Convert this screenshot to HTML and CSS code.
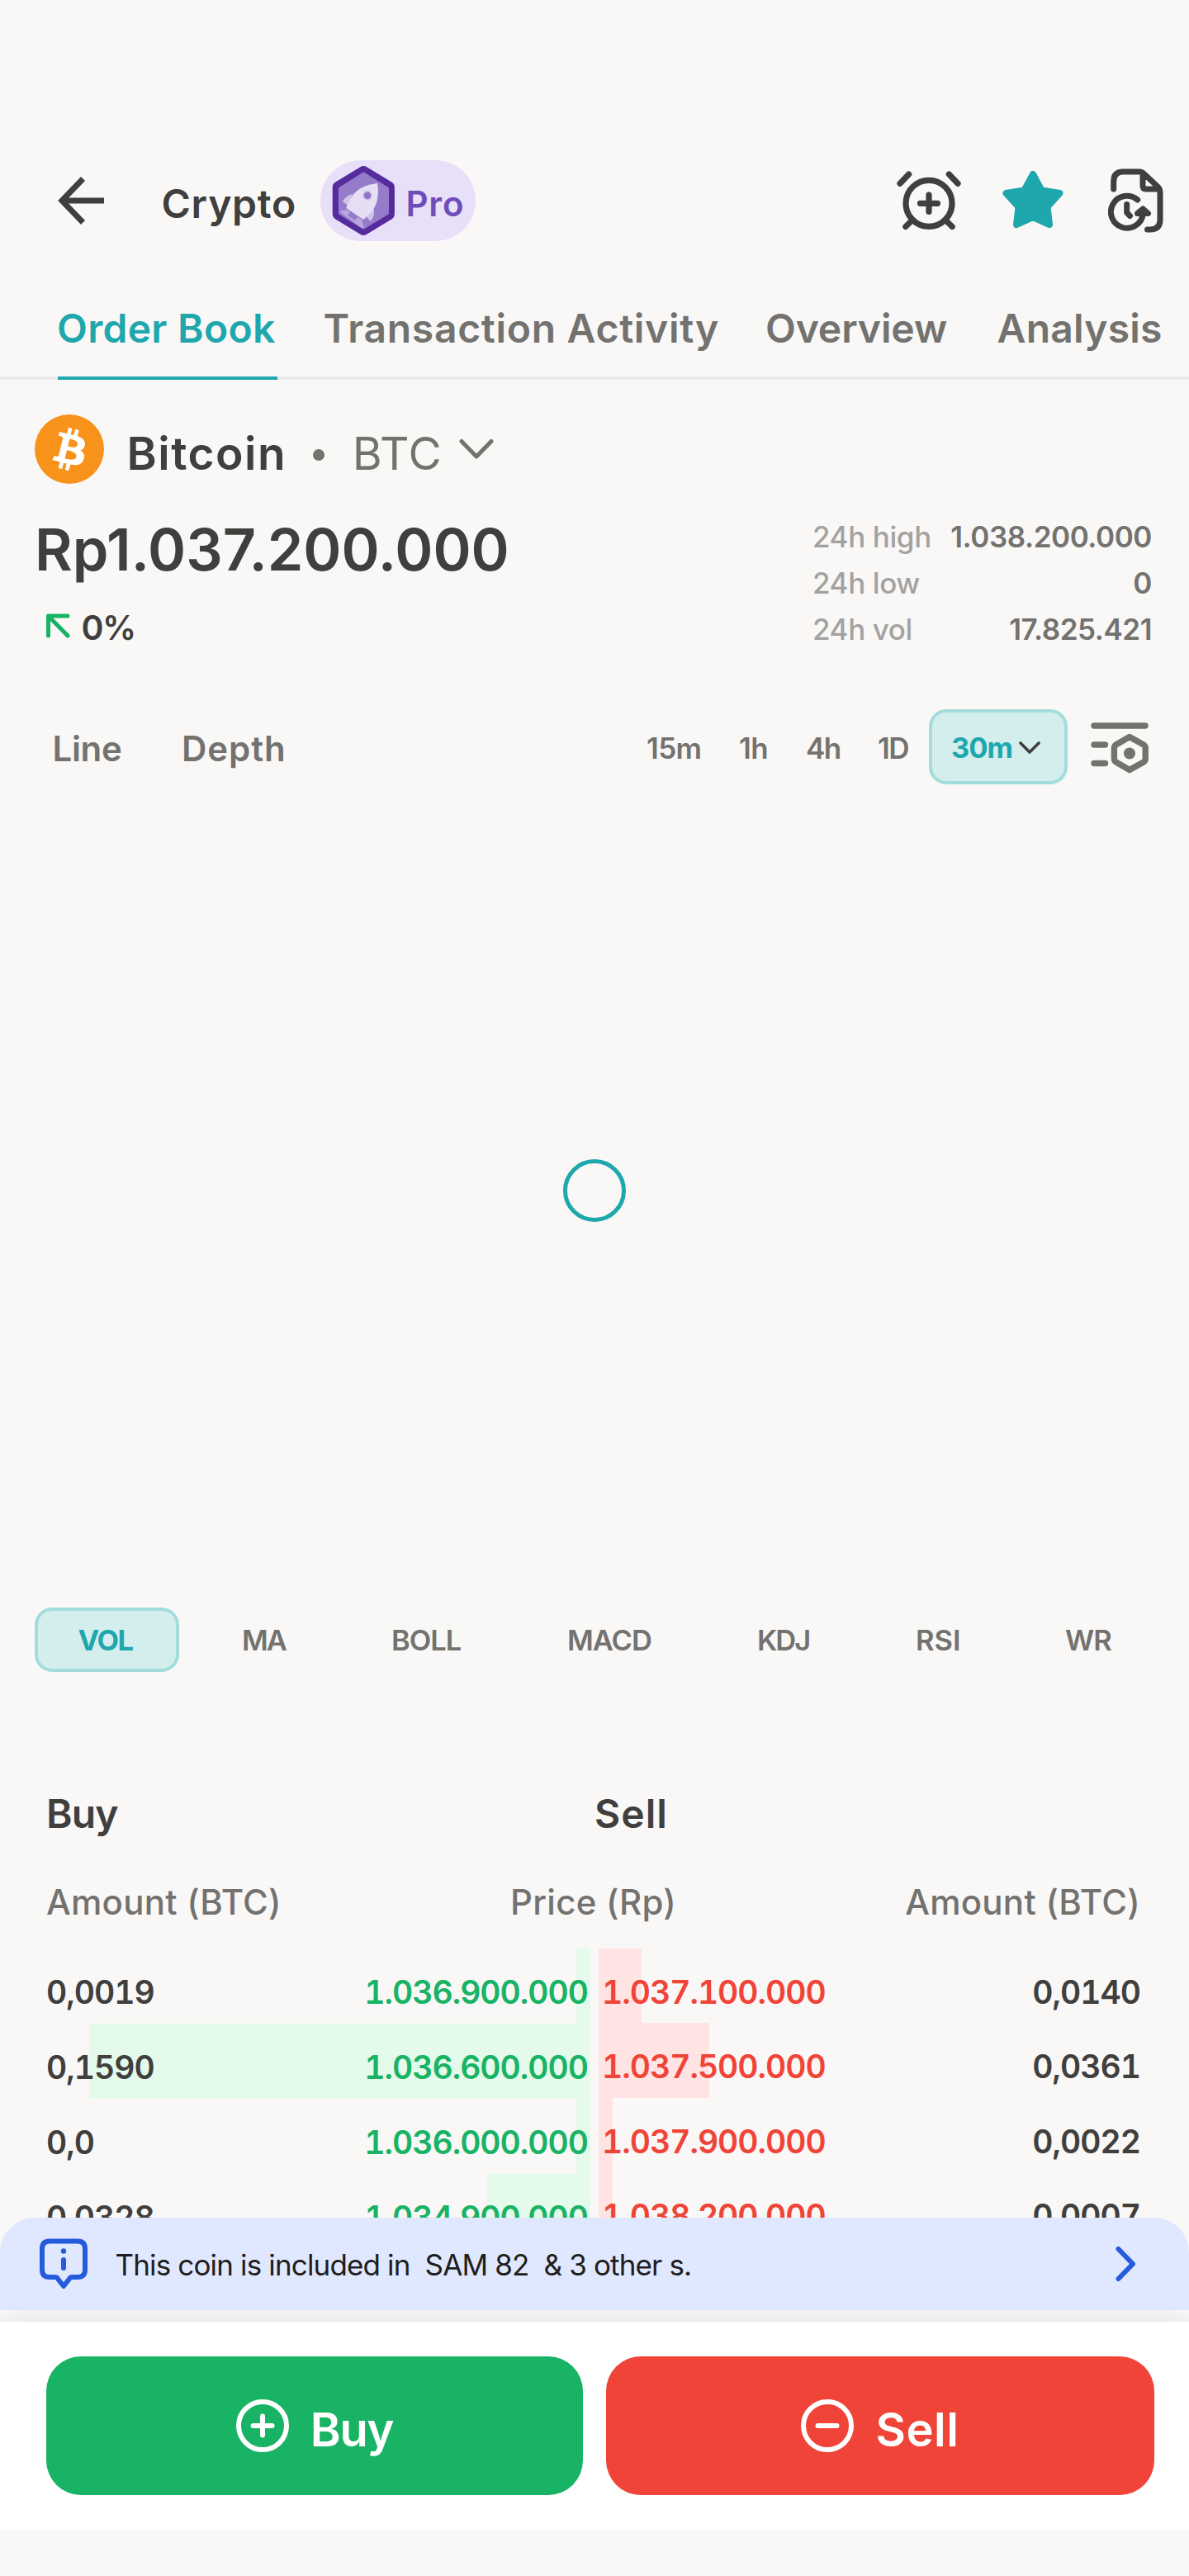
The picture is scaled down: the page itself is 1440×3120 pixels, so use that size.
FILE: index.html
```html
<!DOCTYPE html>
<html lang="en">
<head>
<meta charset="utf-8">
<title>Bitcoin order book</title>
<link rel="stylesheet" href="styles.css">
</head>
<body>
<header class="topbar">
  <svg class="back" width="56" height="58" viewBox="0 0 56 58" fill="none" stroke="#403f3d" stroke-width="7"><path d="M56 29H5M30.500 2.500L5 29L30.500 55.500"/></svg>
  <h1 class="title">Crypto</h1>
  <div class="pro">
    <svg width="76" height="86" viewBox="0 0 76 86">
      <path d="M38.300 8.600L68.400 27V59L38.300 77.300L8.200 59V27Z" fill="#562c9c" stroke="#562c9c" stroke-width="15" stroke-linejoin="round"/>
      <path d="M38.300 10.600L67 28.500V58L38.300 75.500L10 58V28.500Z" fill="#967bca" stroke="#967bca" stroke-width="4" stroke-linejoin="round"/>
      <path d="M9 56L18 54L36 66L39 76.500L34 75Z" fill="#b9a6dd"/>
      <path d="M21 58L30 64.500" stroke="#967bca" stroke-width="7"/>
      <path d="M25 35Q16 37 13 44.500L18.500 48ZM50 50Q53 60 47 68L42 63Z" fill="#d0c3ea"/>
      <path d="M55 22Q59 46 45.500 59L38 66L17.300 52Q25 25 55 22Z" fill="#e6dff4"/>
      <circle cx="43" cy="36.700" r="6" fill="#d0c3ea"/><circle cx="43" cy="36.700" r="4.200" fill="#8e70c8"/>
    </svg>
    <span>Pro</span>
  </div>
  <div class="actions">
    <svg width="80" height="76" viewBox="5 10 80 76" fill="none" stroke="#403f3d" stroke-width="7.200" stroke-linecap="round"><circle cx="45" cy="51.300" r="28"/><path d="M34.500 51.300H55.500M45 41V61.500M10 27.300L20.700 16M69.300 16L80 27.300M16.800 79.500L25 71.500M73.200 79.500L65 71.500"/></svg>
    <svg width="76" height="76" viewBox="133 10 76 76" fill="#1ea7ad" stroke="#1ea7ad" stroke-width="8" stroke-linejoin="round"><path d="M171 16L181.500 35.500L203.500 39L188.500 55.500L191 77L171 68L151 77L153.500 55.500L138.500 39L160.500 35.500Z"/></svg>
    <svg width="67" height="78" viewBox="262 9 67 78" fill="none" stroke="#403f3d" stroke-width="7" stroke-linecap="round" stroke-linejoin="round"><path d="M268.700 34V25Q268.700 13 280 13H300Q303 13 305.500 15.500L322 31Q325 34 325 38V71Q325 83 313 83H309.500M304 15V30Q304 34 308 34H323M297.700 47A19.500 19.500 0 1 0 304.300 64M284.700 52.500V62.500L288.500 66.500"/><path d="M297.500 63.500L304.300 58L310.500 63.500Z" fill="#403f3d"/></svg>
  </div>
</header>

<nav class="tabs">
  <a class="tab active">Order Book</a>
  <a class="tab activity">Transaction Activity</a>
  <a class="tab overview">Overview</a>
  <a class="tab analysis">Analysis</a>
</nav>

<main>
  <section class="coin">
    <svg width="84" height="84" viewBox="0 0 32 32"><circle cx="16" cy="16" r="16" fill="#f7931a"/><path fill="#fff" d="M23.189 14.020c.314-2.096-1.283-3.223-3.465-3.975l.708-2.840-1.728-.430-.690 2.765c-.454-.114-.920-.220-1.385-.326l.695-2.783L15.596 6l-.708 2.839c-.376-.086-.746-.170-1.104-.260l.002-.009-2.384-.595-.460 1.846s1.283.294 1.256.312c.700.175.826.638.805 1.006l-.806 3.235c.048.012.110.030.180.057l-.183-.045-1.130 4.532c-.086.212-.303.531-.793.410.018.025-1.256-.313-1.256-.313l-.858 1.978 2.250.561c.418.105.828.215 1.231.318l-.715 2.872 1.727.430.708-2.840c.472.127.930.245 1.378.357l-.706 2.828 1.728.430.715-2.866c2.948.558 5.164.333 6.097-2.333.752-2.146-.037-3.385-1.588-4.192 1.130-.260 1.980-1.003 2.207-2.538zm-3.950 5.538c-.533 2.147-4.148.986-5.320.695l.950-3.805c1.172.293 4.929.872 4.370 3.110zm.535-5.569c-.487 1.953-3.495.960-4.470.717l.860-3.450c.975.243 4.118.696 3.610 2.733z"/></svg>
    <h2 class="coin-name">Bitcoin</h2>
    <i class="dot"></i>
    <span class="coin-code">BTC</span>
    <svg width="42" height="26" viewBox="0 0 42 26" fill="none" stroke="#73726f" stroke-width="5" stroke-linecap="round" stroke-linejoin="round"><path d="M3 3.500L21 22L39 3.500"/></svg>
  </section>

  <section class="summary">
    <div>
      <div class="price">Rp1.037.200.000</div>
      <div class="change">
        <svg width="29" height="30" viewBox="0 0 29 30" fill="none" stroke="#18b364" stroke-width="5" stroke-linecap="round" stroke-linejoin="round"><path d="M2.500 27V3H26M3 3.500L26 27"/></svg>
        <span>0%</span>
      </div>
    </div>
    <dl class="stats">
      <div><dt>24h high</dt><dd>1.038.200.000</dd></div>
      <div><dt>24h low</dt><dd>0</dd></div>
      <div><dt>24h vol</dt><dd>17.825.421</dd></div>
    </dl>
  </section>

  <section class="toolbar">
    <div class="modes"><span class="line">Line</span><span class="depth">Depth</span></div>
    <div class="intervals">
      <span>15m</span><span>1h</span><span class="tight">4h</span><span class="tight">1D</span>
      <button class="interval-active">30m
        <svg width="26" height="16" viewBox="0 0 26 16" fill="none" stroke="#403f3d" stroke-width="3.600" stroke-linecap="round" stroke-linejoin="round"><path d="M2 2L13 13L24 2"/></svg>
      </button>
      <svg class="settings" width="70" height="62" viewBox="0 0 70 62" fill="none" stroke="#73726f" stroke-width="7.400" stroke-linecap="round" stroke-linejoin="round"><path d="M4 4H66M4 27H17.500M4 49.500H17.500"/><path d="M47 17.500L64 27Q66.200 28.500 66.200 31V44Q66.200 46.500 64 48L47 57.500L30.500 48Q28.400 46.500 28.400 44V31Q28.400 28.500 30.500 27Z"/><circle cx="47" cy="37.500" r="7" fill="#73726f" stroke="none"/></svg>
    </div>
  </section>

  <section class="chart"><div class="loader"></div></section>

  <section class="indicators">
    <span class="selected">VOL</span><span class="narrow">MA</span><span>BOLL</span><span>MACD</span><span class="narrow">KDJ</span><span class="wide">RSI</span><span>WR</span>
  </section>

  <section class="book">
    <div class="sides"><h3 class="side-buy">Buy</h3><h3 class="side-sell">Sell</h3></div>
    <div class="columns"><span>Amount (BTC)</span><span>Price (Rp)</span><span>Amount (BTC)</span></div>
    <div class="depths">
      <div class="bids">
        <div class="row"><i style="width:17px"></i><span>0,0019</span><b>1.036.900.000</b></div>
        <div class="row"><i style="width:607px"></i><span>0,1590</span><b>1.036.600.000</b></div>
        <div class="row"><i style="width:17px"></i><span>0,0</span><b>1.036.000.000</b></div>
        <div class="row"><i style="width:125px"></i><span>0,0328</span><b>1.034.900.000</b></div>
      </div>
      <div class="asks">
        <div class="row"><i style="width:52px"></i><b>1.037.100.000</b><span>0,0140</span></div>
        <div class="row"><i style="width:134px"></i><b>1.037.500.000</b><span>0,0361</span></div>
        <div class="row"><i style="width:17px"></i><b>1.037.900.000</b><span>0,0022</span></div>
        <div class="row"><i style="width:17px"></i><b>1.038.200.000</b><span>0,0007</span></div>
      </div>
    </div>
  </section>
</main>

<aside class="banner">
  <svg width="58" height="62" viewBox="0 0 58 62" fill="none" stroke="#255cdc" stroke-width="6" stroke-linecap="round" stroke-linejoin="round"><path d="M12 3.500H46Q55 3.500 55 12.500V38Q55 47 46 47H39Q37 47 36 49L29 58L22 49Q21 47 19 47H12Q3 47 3 38V12.500Q3 3.500 12 3.500ZM29 26V36"/><circle cx="29" cy="15.500" r="3.200" fill="#255cdc" stroke="none"/></svg>
  <p>This coin is included in&nbsp; SAM 82&nbsp; &amp; 3 other s.</p>
  <svg width="25" height="44" viewBox="0 0 25 44" fill="none" stroke="#255cdc" stroke-width="6" stroke-linecap="round" stroke-linejoin="round"><path d="M3.500 4L21 22L3.500 40"/></svg>
</aside>

<footer class="trade">
  <button class="buy">
    <svg width="64" height="64" viewBox="0 0 64 64" fill="none" stroke="#fff" stroke-width="6" stroke-linecap="round"><circle cx="32" cy="32" r="29"/><path d="M20.500 32H43.500M32 20.500V43.500"/></svg>
    <span>Buy</span>
  </button>
  <button class="sell">
    <svg width="64" height="64" viewBox="0 0 64 64" fill="none" stroke="#fff" stroke-width="6" stroke-linecap="round"><circle cx="32" cy="32" r="29"/><path d="M20.500 32H43.500"/></svg>
    <span>Sell</span>
  </button>
</footer>
<div class="home-inset"></div>
</body>
</html>
```
FILE: styles.css
```css
* { box-sizing: border-box; margin: 0; padding: 0; }
body { width: 1440px; background: #f9f8f7; color: #403f3d; font-family: Inter, "Liberation Sans", sans-serif; font-weight: 600; overflow-x: hidden; }
svg { display: block; flex: none; }
button { border: 0; font: inherit; color: inherit; }
h1, h2, h3, b { font-weight: inherit; }
span, h1, h2, h3, b, dt, dd, p, a { white-space: nowrap; }

.topbar { display: flex; align-items: center; height: 292px; padding: 194px 31px 0 70px; }
.title { margin: 7px 0 0 69.500px; font-size: 48px; line-height: 60px; letter-spacing: .73px; }
.pro { display: flex; align-items: center; gap: 13px; width: 187.500px; height: 98px; margin-left: 29.500px; padding-left: 14px; border-radius: 49px; background: #e8e0f9; color: #6f4db8; font-size: 42px; letter-spacing: .83px; }
.pro span { margin-top: 6px; }
.actions { display: flex; align-items: center; margin-left: auto; }
.actions svg + svg { margin-left: 48px; }
.actions svg:last-child { margin-left: 53px; }

.tabs { display: flex; height: 168px; padding-left: 70px; box-shadow: inset 0 -4px #ebeae8; color: #73726f; font-size: 48px; line-height: 60px; }
.tab { padding-top: 76px; }
.tab.active { width: 266px; border-bottom: 4px solid #1ea7ad; color: #1ea7ad; text-indent: -1px; letter-spacing: .28px; }
.activity { margin-left: 55.500px; letter-spacing: .71px; }
.overview { margin-left: 56px; letter-spacing: -.11px; }
.analysis { margin-left: 60.400px; letter-spacing: .22px; }

.coin { display: flex; align-items: center; height: 126px; padding: 42px 42px 0; font-size: 55px; line-height: 68px; }
.coin-name { margin: 10px 0 0 27.500px; font-size: 55px; letter-spacing: 1.510px; }
.dot { width: 14px; height: 14px; margin: 14px 0 0 32px; border-radius: 50%; background: #73726f; }
.coin-code { margin: 10px 0 0 33.500px; color: #73726f; font-weight: 400; letter-spacing: .58px; }
.coin svg:last-child { margin-left: 21px; }

.summary { display: flex; justify-content: space-between; padding: 36px 45px 0 42px; }
.price { height: 108px; font-size: 70px; line-height: 88px; letter-spacing: .02px; }
.change { display: flex; align-items: center; height: 60px; padding-left: 14px; font-size: 41px; letter-spacing: -1.500px; }
.change svg { margin-top: -5px; }
.change span { margin-left: 13.500px; }
.stats { width: 411px; font-size: 35px; line-height: 56px; }
.stats div { display: flex; justify-content: space-between; }
.stats dt { color: #a3a2a0; font-weight: 550; letter-spacing: -.400px; }
.stats dd { color: #73726f; letter-spacing: -.450px; }

.toolbar { display: flex; justify-content: space-between; align-items: center; height: 91px; margin-top: 69px; padding: 0 49px 0 63.500px; color: #73726f; }
.modes { display: flex; margin-top: 4px; font-size: 42px; line-height: 52px; }
.line { width: 156.500px; letter-spacing: -.350px; }
.depth { letter-spacing: .93px; }
.intervals { display: grid; grid-template-columns: 112px 81px 87px 62px 168px 28px 70px; align-items: center; font-size: 35px; line-height: 44px; }
.intervals span { margin-top: 2px; letter-spacing: -.600px; }
.intervals .tight { letter-spacing: -1.500px; }
.interval-active { display: flex; align-items: center; justify-content: space-between; height: 91px; padding: 2px 29px 0 23px; border: 4px solid #a4dcdc; border-radius: 21px; background: #d4eeee; color: #1ea7ad; font-weight: 650; font-size: 34.500px; letter-spacing: -1px; }
.settings { grid-column: 7; margin-top: 3px; }

.chart { display: flex; align-items: center; justify-content: center; height: 983px; }
.loader { width: 76px; height: 76px; border: 5.500px solid #1ea7ad; border-radius: 50%; }

.indicators { display: grid; grid-template-columns: 251px 181px 213px 230px 192px 181px 1fr; align-items: center; height: 78px; margin: 14px 42px 0; color: #73726f; font-size: 34.500px; letter-spacing: -1px; }
.selected { width: 175px; height: 78px; border: 4px solid #a4dcdc; border-radius: 21px; background: #d4eeee; color: #1ea7ad; font-weight: 650; line-height: 72px; letter-spacing: -1.500px; text-indent: -4px; text-align: center; }
.narrow { letter-spacing: -2px; }
.wide { letter-spacing: 0; }

.book { padding: 142px 56px 0; }
.sides { display: grid; grid-template-columns: 664px 1fr; height: 60px; font-size: 48px; line-height: 60px; }
.sides h3 { font-size: 48px; }
.side-buy { letter-spacing: -.870px; }
.side-sell { letter-spacing: 1.050px; }
.columns { display: flex; justify-content: space-between; margin: 51px 3px 30px 0; color: #73726f; font-weight: 550; font-size: 42px; line-height: 52px; letter-spacing: .250px; }
.depths { display: grid; grid-template-columns: 659px 659px; gap: 10px; height: 326px; overflow: hidden; font-size: 39px; line-height: 48px; letter-spacing: -1px; font-variant-numeric: tabular-nums; }
.row { position: relative; display: flex; justify-content: space-between; padding-top: 29px; }
.row i { position: absolute; top: 0; bottom: 0; }
.row span, .row b { position: relative; }
.bids .row { height: 91.100px; padding-right: 3px; }
.bids i { right: 0; background: #e4faeb; }
.bids b { color: #18b364; }
.asks .row { height: 90.400px; padding-left: 4px; padding-right: 3px; }
.asks i { left: 0; background: #ffe4e3; }
.asks b { color: #f04438; }

.banner { position: relative; z-index: 1; display: flex; align-items: center; height: 112px; padding: 0 64.500px 0 48px; border-radius: 42px 42px 0 0; background: #e0e8ff; }
.banner p { margin: 2px auto 0 33.500px; color: #1f1e1c; font-size: 35px; font-weight: 400; letter-spacing: -.850px; }

.trade { display: flex; gap: 28px; height: 252px; margin-top: 14px; padding: 42px 42px 42px 56px; background: #fff; box-shadow: 0 0 28px rgba(0, 0, 0, .1); }
.trade button { display: flex; align-items: center; justify-content: center; gap: 26px; height: 168px; border-radius: 42px; color: #fff; font-size: 56px; }
.trade span { margin-top: 9px; }
.buy { width: 650px; background: #18b364; letter-spacing: -1.200px; }
.sell { width: 664px; background: #f04438; letter-spacing: .550px; }
.home-inset { position: relative; z-index: 1; height: 56px; background: #f9f8f7; }
```
